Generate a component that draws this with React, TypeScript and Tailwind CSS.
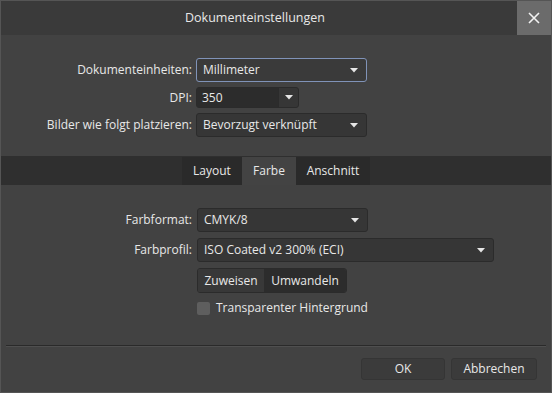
import React from "react";

const font = { fontFamily: '"Open Sans", "Noto Sans", sans-serif' };

function Caret() {
  return (
    <svg width="8" height="5" viewBox="0 0 8 5" className="shrink-0">
      <path d="M0 0 H8 L4 4.5 Z" fill="#e6e6e6" />
    </svg>
  );
}

function Select({ value, w, focus }: { value: string; w: string; focus?: boolean }) {
  return (
    <div
      className={`flex h-[24px] items-center justify-between rounded-[3px] border pl-[6px] pr-[8px] ${w} ${
        focus ? "border-[#8093b8] bg-[#3a3a3a]" : "border-[#2b2b2b] bg-[#363636]"
      }`}
    >
      <span>{value}</span>
      <Caret />
    </div>
  );
}

export default function App() {
  return (
    <div
      className="flex h-[393px] w-[552px] flex-col overflow-hidden border border-[#555] bg-[#424242] text-[12px] text-[#e8e8e8]"
      style={font}
    >
      {/* Title bar */}
      <div className="flex h-[34px] shrink-0 items-center bg-[#3a3a3a]">
        <div className="flex-1 pr-[8px] text-center text-[12.5px]">Dokumenteinstellungen</div>
        <button className="flex h-[34px] w-[34px] items-center justify-center bg-[#6b6b6b]">
          <svg width="12" height="12" viewBox="0 0 12 12">
            <path d="M1 1 L11 11 M11 1 L1 11" stroke="#f2f2f2" strokeWidth="1.6" />
          </svg>
        </button>
      </div>

      {/* General */}
      <div className="mt-[23px] grid grid-cols-[191px_auto] items-center gap-x-[4px] gap-y-[5px]">
        <span className="text-right">Dokumenteinheiten:</span>
        <Select value="Millimeter" w="w-[171px]" focus />
        <span className="text-right">DPI:</span>
        <div className="flex h-[21px] w-[103px] rounded-[3px] border border-[#2b2b2b] bg-[#363636]">
          <div className="flex flex-1 items-center bg-[#2c2c2c] pl-[5px]">350</div>
          <div className="flex w-[20px] items-center justify-center border-l border-[#2b2b2b]">
            <Caret />
          </div>
        </div>
        <span className="text-right">Bilder wie folgt platzieren:</span>
        <Select value="Bevorzugt verknüpft" w="w-[171px]" />
      </div>

      {/* Tabs */}
      <div className="mt-[19px] flex h-[29px] shrink-0 justify-center bg-[#2f2f2f] pt-[1px]">
        <div className="flex w-[60px] items-center justify-center bg-[#2a2a2a]">Layout</div>
        <div className="flex w-[54px] items-center justify-center bg-[#434343]">Farbe</div>
        <div className="flex w-[74px] items-center justify-center bg-[#2a2a2a]">Anschnitt</div>
      </div>

      {/* Colour */}
      <div className="mt-[23px] grid grid-cols-[191px_auto] items-center gap-x-[5px] gap-y-[6px]">
        <span className="text-right">Farbformat:</span>
        <Select value="CMYK/8" w="w-[171px]" />
        <span className="text-right">Farbprofil:</span>
        <Select value="ISO Coated v2 300% (ECI)" w="w-[297px]" />
        <span />
        <div className="flex h-[25px] w-fit overflow-hidden rounded-[3px] border border-[#2b2b2b]">
          <div className="flex w-[66px] items-center justify-center bg-[#383838]">Zuweisen</div>
          <div className="flex w-[82px] items-center justify-center bg-[#2c2c2c]">Umwandeln</div>
        </div>
        <span />
        <label className="flex items-center gap-[6px]">
          <span className="h-[13px] w-[13px] rounded-[2px] bg-[#5e5e5e]" />
          Transparenter Hintergrund
        </label>
      </div>

      {/* Footer */}
      <div className="mx-[5px] mt-auto border-t border-[#2a2a2a] shadow-[0_1px_0_#4f4f4f]" />
      <div className="flex h-[46px] shrink-0 items-center justify-end gap-[6px] pr-[14px]">
        <button className="h-[22px] w-[84px] rounded-[3px] border border-[#353535] bg-[#3b3b3b]">OK</button>
        <button className="h-[22px] w-[86px] rounded-[3px] border border-[#353535] bg-[#3b3b3b]">Abbrechen</button>
      </div>
    </div>
  );
}
